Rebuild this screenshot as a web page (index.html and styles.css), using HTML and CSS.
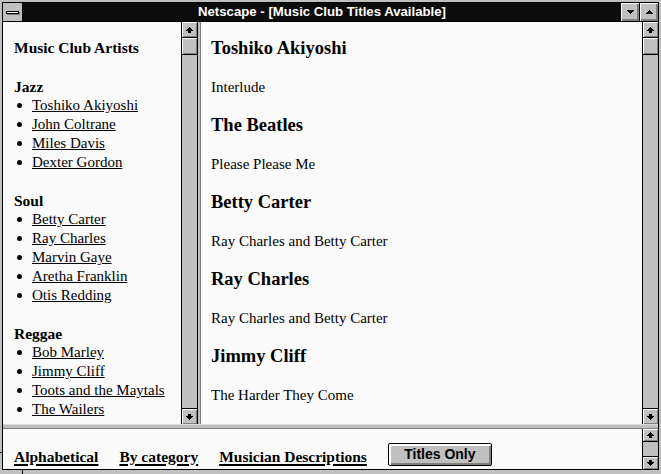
FILE: index.html
```html
<!DOCTYPE html>
<html>
<head>
<meta charset="utf-8">
<title>Netscape - [Music Club Titles Available]</title>
<link rel="stylesheet" href="styles.css">
</head>
<body>
<div class="window">
  <span class="notch notch-left"></span>
  <span class="notch notch-bottom"></span>
  <div class="inner">
    <div class="titlebar">
      <div class="sysmenu"><span class="sysbar"></span></div>
      <div class="title">Netscape - [Music Club Titles Available]</div>
      <div class="tbtn"><svg width="7" height="4" viewBox="0 0 7 4"><path d="M0 0h7v1h-1v1h-1v1h-1v1h-1v-1h-1v-1h-1v-1h-1z" fill="#000"/></svg></div>
      <div class="tbtn tbtn-max"><svg width="7" height="4" viewBox="0 0 7 4"><path d="M3 0h1v1h1v1h1v1h1v1h-7v-1h1v-1h1v-1h1z" fill="#000"/></svg></div>
    </div>
    <div class="client">
      <div class="toprow">
        <div class="frame left">
          <div class="lhead">Music Club Artists</div>
          <div class="cat">Jazz</div>
          <ul class="list">
            <li><a href="#">Toshiko Akiyoshi</a></li>
            <li><a href="#">John Coltrane</a></li>
            <li><a href="#">Miles Davis</a></li>
            <li><a href="#">Dexter Gordon</a></li>
          </ul>
          <div class="cat">Soul</div>
          <ul class="list">
            <li><a href="#">Betty Carter</a></li>
            <li><a href="#">Ray Charles</a></li>
            <li><a href="#">Marvin Gaye</a></li>
            <li><a href="#">Aretha Franklin</a></li>
            <li><a href="#">Otis Redding</a></li>
          </ul>
          <div class="cat">Reggae</div>
          <ul class="list">
            <li><a href="#">Bob Marley</a></li>
            <li><a href="#">Jimmy Cliff</a></li>
            <li><a href="#">Toots and the Maytals</a></li>
            <li><a href="#">The Wailers</a></li>
          </ul>
        </div>
        <div class="vscroll vscroll-left">
          <div class="sb sb-up"><svg width="7" height="6" viewBox="0 0 7 6"><path d="M3 0h1v1h1v1h1v1h1v1h-2v2h-3v-2h-2v-1h1v-1h1v-1h1z" fill="#000"/></svg></div>
          <div class="thumb"></div>
          <div class="sb sb-dn"><svg width="7" height="6" viewBox="0 0 7 6"><path d="M2 0h3v2h2v1h-1v1h-1v1h-1v1h-1v-1h-1v-1h-1v-1h-1v-1h2z" fill="#000"/></svg></div>
        </div>
        <div class="vsep"></div>
        <div class="frame right">
          <h3 class="artist">Toshiko Akiyoshi</h3>
          <p class="album">Interlude</p>
          <h3 class="artist">The Beatles</h3>
          <p class="album">Please Please Me</p>
          <h3 class="artist">Betty Carter</h3>
          <p class="album">Ray Charles and Betty Carter</p>
          <h3 class="artist">Ray Charles</h3>
          <p class="album">Ray Charles and Betty Carter</p>
          <h3 class="artist">Jimmy Cliff</h3>
          <p class="album">The Harder They Come</p>
        </div>
        <div class="vscroll vscroll-right">
          <div class="sb sb-up"><svg width="7" height="6" viewBox="0 0 7 6"><path d="M3 0h1v1h1v1h1v1h1v1h-2v2h-3v-2h-2v-1h1v-1h1v-1h1z" fill="#000"/></svg></div>
          <div class="thumb"></div>
          <div class="sb sb-dn"><svg width="7" height="6" viewBox="0 0 7 6"><path d="M2 0h3v2h2v1h-1v1h-1v1h-1v1h-1v-1h-1v-1h-1v-1h-1v-1h2z" fill="#000"/></svg></div>
        </div>
      </div>
      <div class="hsep"></div>
      <div class="bottomrow">
        <div class="frame bottom">
          <a href="#" class="navlink">Alphabetical</a>
          <a href="#" class="navlink">By category</a>
          <a href="#" class="navlink">Musician Descriptions</a>
          <button class="btn" type="button">Titles Only</button>
        </div>
        <div class="vscroll vscroll-small">
          <div class="sb sb-up sb-small"><svg width="7" height="6" viewBox="0 0 7 6"><path d="M3 0h1v1h1v1h1v1h1v1h-2v2h-3v-2h-2v-1h1v-1h1v-1h1z" fill="#000"/></svg></div>
          <div class="sb sb-dn sb-small"><svg width="7" height="6" viewBox="0 0 7 6"><path d="M2 0h3v2h2v1h-1v1h-1v1h-1v1h-1v-1h-1v-1h-1v-1h-1v-1h2z" fill="#000"/></svg></div>
        </div>
      </div>
    </div>
  </div>
</div>
</body>
</html>
```

FILE: styles.css
```css
html, body {
  margin: 0;
  padding: 0;
  background: #c0c0c0;
}

.window {
  position: relative;
  width: 661px;
  height: 474px;
  box-sizing: border-box;
  padding: 2px 2px 4px 2px;
  background: #c0c0c0;
}

.notch {
  position: absolute;
  background: #000;
}
.notch-left {
  left: 0;
  top: 452px;
  width: 2px;
  height: 1px;
}
.notch-bottom {
  left: 22px;
  bottom: 0;
  width: 1px;
  height: 4px;
}

.inner {
  height: 100%;
  box-sizing: border-box;
  border: 1px solid #000;
  display: flex;
  flex-direction: column;
}

/* Title bar */
.titlebar {
  flex: none;
  height: 18px;
  display: flex;
  border-bottom: 1px solid #000;
}
.sysmenu {
  width: 19px;
  background: #c0c0c0;
  border-right: 1px solid #000;
  display: flex;
  align-items: center;
  justify-content: center;
}
.sysbar {
  width: 11px;
  height: 1px;
  background: #fff;
  border: 1px solid #000;
  box-shadow: 1px 1px 0 #808080;
  margin-left: -1px;
}
.title {
  flex: 1;
  background: #0c0c0c;
  color: #fff;
  font: bold 13.2px/18px "Liberation Sans", Arial, sans-serif;
  text-align: center;
  white-space: nowrap;
}
.tbtn {
  width: 18px;
  background: #c0c0c0;
  box-shadow: inset 1px 1px 0 #fff, inset -1px -1px 0 #808080, inset -2px -2px 0 #808080;
  display: flex;
  align-items: center;
  justify-content: center;
}
.tbtn svg {
  display: block;
  margin-top: -1px;
}
.tbtn-max {
  border-left: 1px solid #000;
}

/* Client area */
.client {
  flex: 1;
  display: flex;
  flex-direction: column;
  min-height: 0;
}
.toprow {
  flex: none;
  height: 402px;
  display: flex;
}
.frame {
  background: #fafafa;
  overflow: hidden;
  box-sizing: border-box;
  color: #000;
}

.left {
  width: 178px;
  flex: none;
  padding: 16px 0 0 11px;
  font-family: "Liberation Serif", "Times New Roman", serif;
}
.lhead {
  font-weight: bold;
  font-size: 15.5px;
  line-height: 19px;
  margin-bottom: 20px;
  white-space: nowrap;
}
.cat {
  font-weight: bold;
  font-size: 15.5px;
  line-height: 19px;
}
.list {
  list-style: none;
  margin: 0 0 19px 0;
  padding: 0;
}
.list li {
  display: flex;
  align-items: center;
  font-size: 15px;
  line-height: 19px;
  white-space: nowrap;
  padding-left: 3px;
}
.list li::before {
  content: "";
  width: 5px;
  height: 5px;
  border-radius: 50%;
  background: #000;
  margin-right: 10px;
  flex: none;
  margin-top: -1px;
}
.list a {
  color: #000;
  text-decoration: underline;
}

.right {
  flex: 1;
  padding: 16px 0 0 10px;
  font-family: "Liberation Serif", "Times New Roman", serif;
}
.artist {
  margin: 0 0 20px 0;
  font-size: 18.5px;
  line-height: 20px;
  font-weight: bold;
  white-space: nowrap;
}
.album {
  margin: 0 0 18px 0;
  font-size: 15px;
  line-height: 19px;
  white-space: nowrap;
}

/* Scrollbars */
.vscroll {
  flex: none;
  width: 15px;
  border-left: 1px solid #000;
  background: #c0c0c0;
  display: flex;
  flex-direction: column;
}
.vscroll-left {
  width: 15px;
  border-right: 1px solid #000;
}
.sb {
  flex: none;
  height: 16px;
  box-sizing: border-box;
  background: #c0c0c0;
  box-shadow: inset 1px 1px 0 #fff, inset -1px -1px 0 #808080;
  display: flex;
  align-items: center;
  justify-content: center;
}
.sb svg {
  display: block;
}
.sb-up {
  border-bottom: 1px solid #000;
}
.sb-dn {
  border-top: 1px solid #000;
  margin-top: auto;
}
.sb-small {
  height: 13px;
}
.thumb {
  flex: none;
  height: 17px;
  box-sizing: border-box;
  border-bottom: 1px solid #000;
  background: #c0c0c0;
  box-shadow: inset 1px 1px 0 #fff, inset -1px -1px 0 #808080;
}

.vsep {
  flex: none;
  width: 2px;
  background: #c0c0c0;
  border-right: 1px solid #808080;
}
.hsep {
  flex: none;
  height: 5px;
  background: #c0c0c0;
  border-top: 1px solid #dcdcdc;
  border-bottom: 1px solid #808080;
  box-sizing: border-box;
}

/* Bottom frame */
.bottomrow {
  flex: 1;
  display: flex;
  min-height: 0;
}
.bottom {
  flex: 1;
  display: flex;
  align-items: flex-start;
  gap: 21px;
  padding: 0 0 0 11px;
  font-family: "Liberation Serif", "Times New Roman", serif;
}
.navlink {
  margin-top: 18px;
  color: #000;
  font-weight: bold;
  font-size: 15.5px;
  line-height: 19px;
  text-decoration: underline;
  text-decoration-thickness: 2px;
  text-underline-offset: 2px;
  white-space: nowrap;
}
.btn {
  margin: 14px 0 0 0;
  width: 104px;
  height: 23px;
  box-sizing: border-box;
  padding: 0;
  border: 1px solid #000;
  border-radius: 2px;
  background: #c0c0c0;
  box-shadow: inset 1px 1px 0 #fff, inset 2px 2px 0 #fff, inset -1px -1px 0 #808080, inset -2px -2px 0 #808080;
  font: bold 14px/21px "Liberation Sans", Arial, sans-serif;
  color: #000;
  text-align: center;
}
```
